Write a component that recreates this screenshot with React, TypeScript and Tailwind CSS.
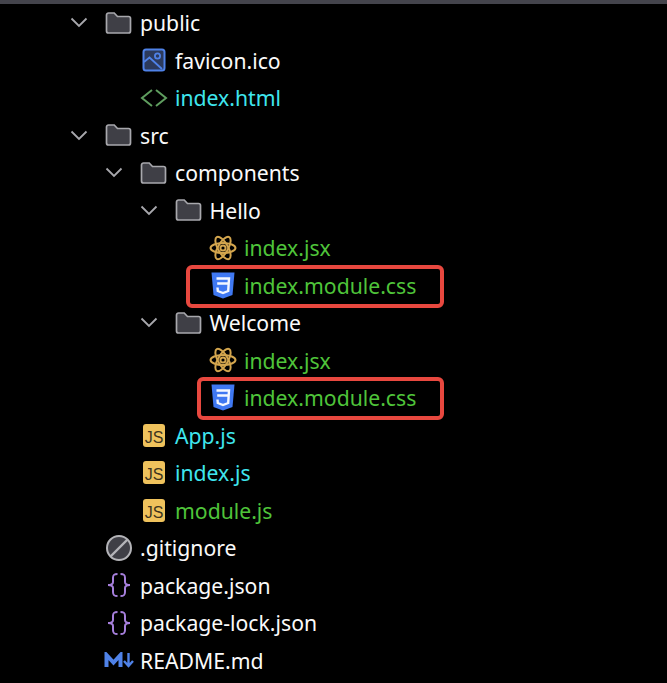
type Kind = 'folder' | 'image' | 'html' | 'react' | 'css' | 'js' | 'ignore' | 'json' | 'md'

type Row = {
  name: string
  kind: Kind
  indent: string
  color: string
  marked?: string
}

const white = 'text-[#fafafa]'
const cyan = 'text-[#3fe6ee]'
const green = 'text-[#4fc43a]'

const rows: Row[] = [
  { name: 'public', kind: 'folder', indent: 'pl-[59px]', color: white },
  { name: 'favicon.ico', kind: 'image', indent: 'pl-[94px]', color: white },
  { name: 'index.html', kind: 'html', indent: 'pl-[94px]', color: cyan },
  { name: 'src', kind: 'folder', indent: 'pl-[59px]', color: white },
  { name: 'components', kind: 'folder', indent: 'pl-[94px]', color: white },
  { name: 'Hello', kind: 'folder', indent: 'pl-[128.5px]', color: white },
  { name: 'index.jsx', kind: 'react', indent: 'pl-[163px]', color: green },
  { name: 'index.module.css', kind: 'css', indent: 'pl-[163px]', color: green, marked: 'left-[186px]' },
  { name: 'Welcome', kind: 'folder', indent: 'pl-[128.5px]', color: white },
  { name: 'index.jsx', kind: 'react', indent: 'pl-[163px]', color: green },
  { name: 'index.module.css', kind: 'css', indent: 'pl-[163px]', color: green, marked: 'left-[197px]' },
  { name: 'App.js', kind: 'js', indent: 'pl-[94px]', color: cyan },
  { name: 'index.js', kind: 'js', indent: 'pl-[94px]', color: cyan },
  { name: 'module.js', kind: 'js', indent: 'pl-[94px]', color: green },
  { name: '.gitignore', kind: 'ignore', indent: 'pl-[59px]', color: white },
  { name: 'package.json', kind: 'json', indent: 'pl-[59px]', color: white },
  { name: 'package-lock.json', kind: 'json', indent: 'pl-[59px]', color: white },
  { name: 'README.md', kind: 'md', indent: 'pl-[59px]', color: white },
]

function Icon({ kind }: { kind: Kind }) {
  if (kind === 'folder') {
    return (
      <svg width="28" height="24" viewBox="0 0 28 24">
        <path
          d="M1.500 4a2 2 0 0 1 2-2h5.700l3.300 3.500h11a2 2 0 0 1 2 2v12.500a2 2 0 0 1-2 2h-20a2 2 0 0 1-2-2z"
          fill="#3f3f46"
          stroke="#a8a8ad"
          strokeWidth="1.700"
        />
      </svg>
    )
  }
  if (kind === 'image') {
    return (
      <svg width="24" height="24" viewBox="0 0 24 24">
        <rect x="1.500" y="1.500" width="21" height="21" rx="2.500" fill="#2c3a5c" stroke="#4f82e8" strokeWidth="2" />
        <circle cx="15.500" cy="8" r="2.600" fill="none" stroke="#4f82e8" strokeWidth="1.800" />
        <path d="M2 14l5.500-4.500L20 21" fill="none" stroke="#4f82e8" strokeWidth="1.800" />
      </svg>
    )
  }
  if (kind === 'html') {
    return (
      <svg width="30" height="20" viewBox="0 0 30 20">
        <path d="M13 2L3 10l10 8M17 2l10 8-10 8" fill="none" stroke="#5f9e5f" strokeWidth="2" />
      </svg>
    )
  }
  if (kind === 'react') {
    return (
      <svg width="28" height="26" viewBox="-14 -13 28 26" fill="none" stroke="#d4a64e" strokeWidth="2">
        <ellipse rx="12.500" ry="5" />
        <ellipse rx="12.500" ry="5" transform="rotate(60)" />
        <ellipse rx="12.500" ry="5" transform="rotate(120)" />
        <circle r="2.600" />
      </svg>
    )
  }
  if (kind === 'css') {
    return (
      <svg width="24" height="27" viewBox="0 0 24 27">
        <path d="M0.500 0.500h23l-2 22.500-9.500 3.500-9.500-3.500z" fill="#3f78f2" />
        <path d="M5.500 6.500h12.500l-0.800 12.500-5.200 2-5.200-2-0.300-3.500M6.200 11.500h11.300" fill="none" stroke="#f4f7ff" strokeWidth="2.400" />
      </svg>
    )
  }
  if (kind === 'js') {
    return (
      <div className="flex h-[23px] w-[22px] items-end justify-center rounded-[3px] bg-[#efc25c] font-['Liberation_Sans',sans-serif] text-[16px] leading-[18px] text-[#3c3420]">
        JS
      </div>
    )
  }
  if (kind === 'ignore') {
    return (
      <svg width="28" height="28" viewBox="0 0 28 28">
        <circle cx="14" cy="14" r="12" fill="#3f3f46" stroke="#b4b4b8" strokeWidth="2" />
        <path d="M5.500 22.500L22.500 5.500" stroke="#b4b4b8" strokeWidth="2.400" />
      </svg>
    )
  }
  if (kind === 'json') {
    return (
      <svg width="26" height="26" viewBox="0 0 26 26" fill="none" stroke="#a67fdc" strokeWidth="2">
        <path d="M11.500 2C8 2 7 3 7 6V10C7 12 5 13 2 13C5 13 7 14 7 16V20C7 23 8 24 11.500 24" />
        <path d="M14.500 2C18 2 19 3 19 6V10C19 12 21 13 24 13C21 13 19 14 19 16V20C19 23 18 24 14.500 24" />
      </svg>
    )
  }
  return (
    <svg width="30" height="16" viewBox="0 0 30 16" fill="none" stroke="#4f82e8">
      <path d="M2.500 15V3L9.500 10.500 16.500 3V15" strokeWidth="4" />
      <path d="M24.500 1v12.500M20 9l4.500 5 4.500-5" strokeWidth="2.400" />
    </svg>
  )
}

function TreeRow({ row }: { row: Row }) {
  return (
    <div className={`relative flex h-[37.5px] items-center ${row.indent}`}>
      <div className="flex w-[40px] justify-center">
        {row.kind === 'folder' && (
          <svg width="18" height="11" viewBox="0 0 18 11" fill="none" stroke="#a8a8ad" strokeWidth="1.800">
            <path d="M1.500 1.500L9 9l7.500-7.500" />
          </svg>
        )}
      </div>
      <div className="mr-px flex w-[40px] justify-center">
        <Icon kind={row.kind} />
      </div>
      <span className={`whitespace-nowrap pt-px text-[21.2px] ${row.color}`}>{row.name}</span>
      {row.marked && (
        <div className={`absolute -top-[2px] right-[223px] h-[43px] rounded-[6px] border-[4px] border-[#e8483f] ${row.marked}`} />
      )}
    </div>
  )
}

export default function App() {
  return (
    <div className="h-[683px] w-[667px] overflow-hidden bg-black font-['Noto_Sans',sans-serif]">
      <div className="h-[4px] bg-[#44444c]" />
      {rows.map((row, i) => (
        <TreeRow key={i} row={row} />
      ))}
    </div>
  )
}
